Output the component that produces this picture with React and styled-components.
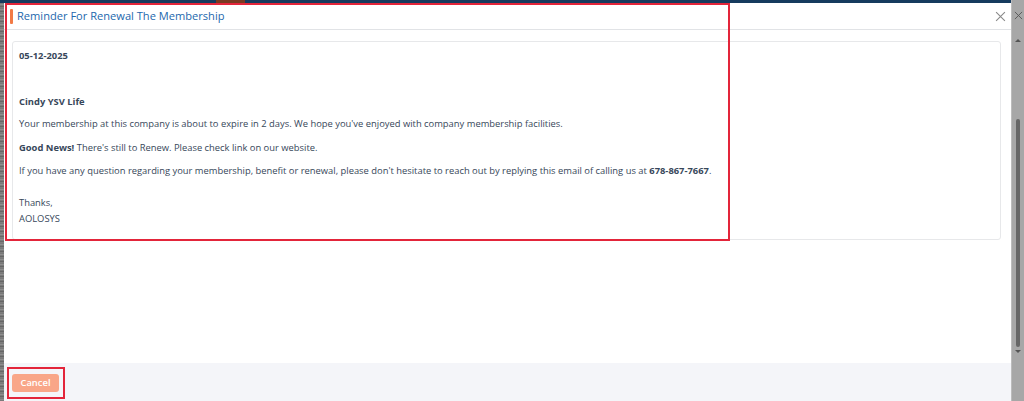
import React from 'react';
import styled, { createGlobalStyle } from 'styled-components';

const GlobalStyle = createGlobalStyle`
  html, body { margin: 0; padding: 0; }
  body {
    width: 1024px;
    height: 401px;
    overflow: hidden;
    font-family: "Open Sans", "Liberation Sans", sans-serif;
    background: #5a5f66;
  }
`;

const Page = styled.div`
  position: relative;
  display: flex;
  width: 1024px;
  height: 401px;
`;

const MainColumn = styled.div`
  flex: 1;
  display: flex;
  flex-direction: column;
  min-width: 0;
`;

const TopStrip = styled.div`
  height: 3px;
  background: #163b5e;
  display: flex;
  padding-left: 216px;
`;

const TopTab = styled.div`
  width: 29px;
  background: #7a3a22;
`;

const Stage = styled.div`
  flex: 1;
  display: flex;
  min-height: 0;
`;

const LeftStrip = styled.div`
  width: 4px;
  background: repeating-linear-gradient(
    180deg,
    #6f6f6f 0px,
    #9a9a9a 2px,
    #5b5b5b 3px,
    #8a8a8a 5px
  );
`;

const Modal = styled.div`
  flex: 1;
  display: flex;
  flex-direction: column;
  background: #fff;
`;

const Header = styled.div`
  height: 26px;
  display: flex;
  align-items: center;
  padding: 0 4px 0 6px;
  border-bottom: 1px solid #e1e3e6;
`;

const Accent = styled.span`
  width: 3px;
  height: 15px;
  background: #f27a45;
  border-radius: 1px;
  margin-right: 4px;
`;

const Title = styled.h1`
  flex: 1;
  margin: 0 0 1px;
  font-size: 11.1px;
  font-weight: 400;
  color: #2367ad;
`;

const CloseButton = styled.button`
  border: none;
  background: transparent;
  padding: 0;
  width: 14px;
  height: 14px;
  display: flex;
  align-items: center;
  justify-content: center;
  cursor: pointer;
`;

const Body = styled.div`
  flex: 1;
  padding: 11px 10px 0 8px;
`;

const Card = styled.div`
  border: 1px solid #e7e8ea;
  border-radius: 3px;
  padding: 7px 7px 12px 6px;
  color: #37475a;
  font-size: 9.4px;
`;

const Para = styled.p`
  margin: ${(p) => p.$mt || 0}px 0 0;
  line-height: ${(p) => p.$lh || 14}px;
  font-weight: ${(p) => (p.$bold ? 700 : 400)};
`;

const Footer = styled.div`
  height: 38px;
  background: #f4f5f9;
  display: flex;
  align-items: center;
  padding-left: 8px;
`;

const CancelButton = styled.button`
  width: 47px;
  height: 18px;
  border: none;
  border-radius: 3px;
  background: #f9a688;
  color: #fff;
  font-family: "Open Sans", "Liberation Sans", sans-serif;
  font-size: 9.4px;
  font-weight: 600;
  padding: 0;
  margin-top: 1px;
`;

const Scrollbar = styled.div`
  width: 12px;
  background: #a7a7a7;
  display: flex;
  flex-direction: column;
  align-items: center;
  border-left: 1px solid #bcbcbc;
`;

const EdgeClose = styled.div`
  height: 30px;
  display: flex;
  align-items: center;
  justify-content: center;
`;

const Arrow = styled.div`
  width: 0;
  height: 0;
  border-left: 3px solid transparent;
  border-right: 3px solid transparent;
  ${(p) =>
    p.$down
      ? 'border-top: 3px solid #555;'
      : 'border-bottom: 3px solid #555;'}
  margin: ${(p) => (p.$down ? '3px 0 0' : '9px 0 0')};
`;

const Track = styled.div`
  flex: 1;
  width: 100%;
  display: flex;
  flex-direction: column;
  align-items: center;
  padding-top: 77px;
`;

const Thumb = styled.div`
  width: 4px;
  height: 228px;
  border-radius: 2px;
  background: #666;
`;

const Highlight = styled.div`
  position: absolute;
  left: ${(p) => p.$x}px;
  top: ${(p) => p.$y}px;
  width: ${(p) => p.$w}px;
  height: ${(p) => p.$h}px;
  border: 2px solid #e3253a;
  box-sizing: border-box;
  pointer-events: none;
`;

const XIcon = ({ size = 11, color = '#8a8a8a' }) => (
  <svg width={size} height={size} viewBox="0 0 10 10">
    <path d="M1 1 L9 9 M9 1 L1 9" stroke={color} strokeWidth="1" fill="none" />
  </svg>
);

export default function App() {
  return (
    <>
      <GlobalStyle />
      <Page>
        <MainColumn>
          <TopStrip>
            <TopTab />
          </TopStrip>
          <Stage>
            <LeftStrip />
            <Modal>
              <Header>
                <Accent />
                <Title>Reminder For Renewal The Membership</Title>
                <CloseButton aria-label="Close">
                  <XIcon />
                </CloseButton>
              </Header>
              <Body>
                <Card>
                  <Para $bold>05-12-2025</Para>
                  <Para $bold $mt={32}>Cindy YSV Life</Para>
                  <Para $mt={8}>
                    Your membership at this company is about to expire in 2 days. We hope you've enjoyed with company membership facilities.
                  </Para>
                  <Para $mt={10}>
                    <b>Good News!</b> There's still to Renew. Please check link on our website.
                  </Para>
                  <Para $mt={9}>
                    If you have any question regarding your membership, benefit or renewal, please don't hesitate to reach out by replying this email of calling us at <b>678-867-7667</b>.
                  </Para>
                  <Para $mt={17} $lh={16}>Thanks,</Para>
                  <Para $lh={16}>AOLOSYS</Para>
                </Card>
              </Body>
              <Footer>
                <CancelButton>Cancel</CancelButton>
              </Footer>
            </Modal>
          </Stage>
        </MainColumn>
        <Scrollbar>
          <EdgeClose>
            <XIcon size={9} color="#555" />
          </EdgeClose>
          <Arrow />
          <Track>
            <Thumb />
            <Arrow $down />
          </Track>
        </Scrollbar>
        <Highlight $x={5} $y={3} $w={725} $h={238} />
        <Highlight $x={7} $y={367} $w={58} $h={32} />
      </Page>
    </>
  );
}
